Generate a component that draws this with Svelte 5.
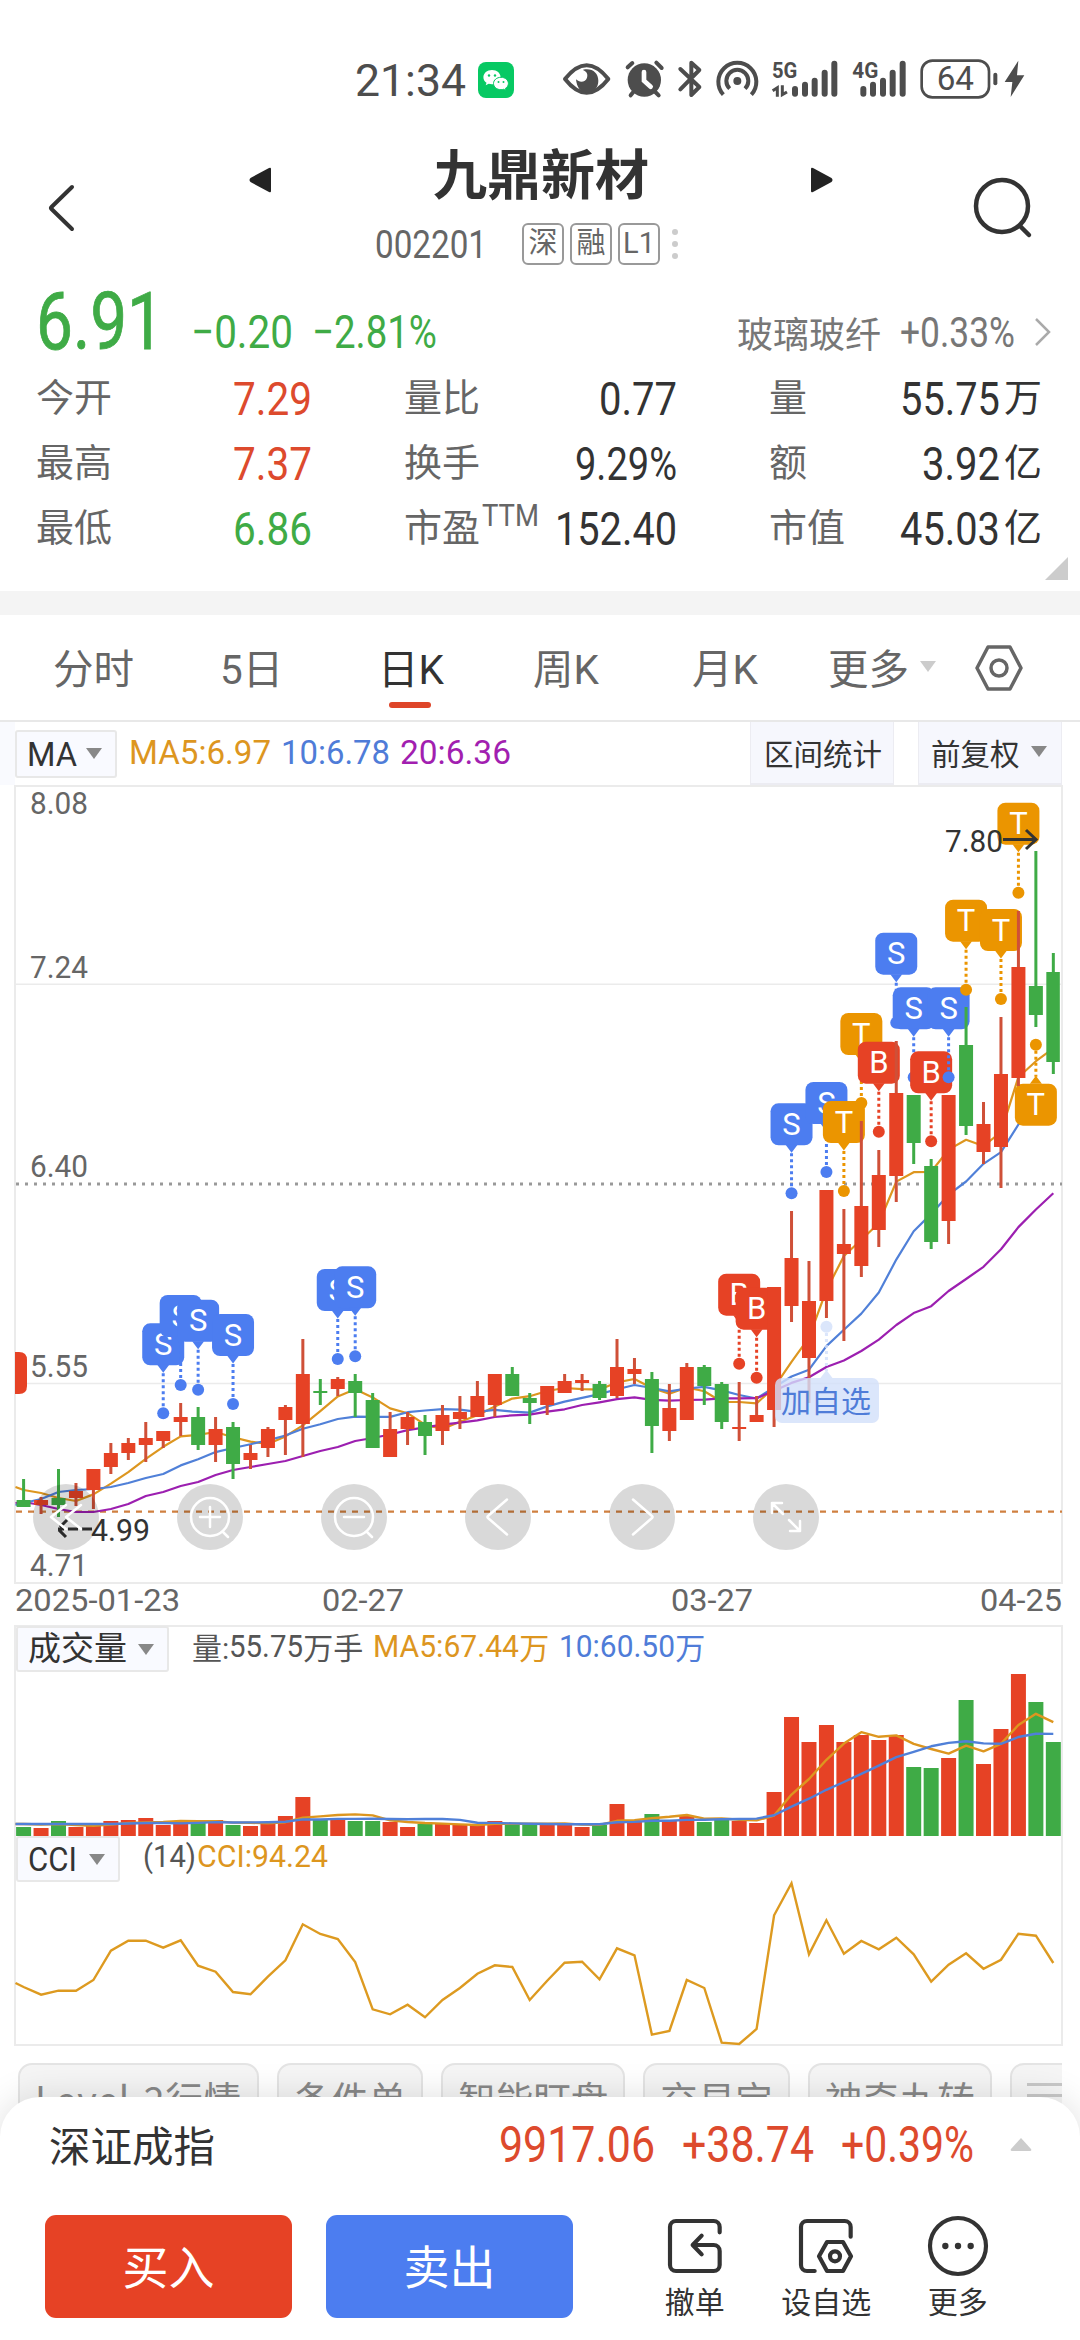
<script lang="ts">
  type Candle = [up: number, high: number, top: number, bottom: number, low: number];

  // up flag, then high / body top / body bottom / low on the chart's y axis
  const candles: Candle[] = [
    [0, 1479, 1500, 1507, 1507], [1, 1497, 1500, 1505, 1514], [0, 1469, 1498, 1505, 1517],
    [1, 1483, 1491, 1498, 1506], [1, 1469, 1469, 1490, 1509], [1, 1443, 1453, 1467, 1474],
    [1, 1438, 1443, 1453, 1460], [1, 1422, 1438, 1445, 1462], [1, 1431, 1431, 1441, 1448],
    [1, 1403, 1417, 1422, 1436], [0, 1407, 1417, 1445, 1450], [1, 1417, 1429, 1445, 1462],
    [0, 1422, 1427, 1464, 1479], [1, 1445, 1453, 1460, 1469], [1, 1427, 1429, 1448, 1457],
    [1, 1405, 1407, 1420, 1455], [1, 1339, 1374, 1424, 1457], [0, 1379, 1391, 1393, 1405],
    [1, 1377, 1379, 1389, 1396], [0, 1374, 1381, 1393, 1417], [0, 1393, 1400, 1448, 1448],
    [1, 1412, 1429, 1457, 1457], [1, 1412, 1417, 1429, 1445], [0, 1415, 1422, 1436, 1455],
    [1, 1405, 1415, 1431, 1445], [1, 1396, 1412, 1419, 1429], [1, 1381, 1396, 1417, 1417],
    [1, 1374, 1374, 1405, 1417], [0, 1367, 1374, 1396, 1396], [0, 1393, 1398, 1403, 1424],
    [1, 1386, 1386, 1405, 1415], [1, 1374, 1381, 1393, 1393], [1, 1374, 1380, 1383, 1391],
    [0, 1381, 1384, 1398, 1400], [1, 1339, 1367, 1396, 1398], [1, 1358, 1369, 1374, 1384],
    [0, 1372, 1379, 1426, 1453], [1, 1384, 1408, 1431, 1441], [1, 1363, 1367, 1420, 1420],
    [0, 1365, 1367, 1386, 1405], [0, 1382, 1384, 1422, 1429], [1, 1382, 1427, 1429, 1441],
    [1, 1396, 1415, 1422, 1422], [1, 1287, 1287, 1410, 1427], [1, 1211, 1258, 1306, 1322],
    [1, 1261, 1301, 1358, 1403], [1, 1190, 1190, 1301, 1318], [1, 1209, 1244, 1254, 1341],
    [1, 1121, 1206, 1266, 1277], [1, 1150, 1175, 1230, 1247], [1, 1041, 1093, 1176, 1202],
    [0, 1095, 1095, 1143, 1164], [0, 1159, 1166, 1242, 1249], [1, 1095, 1095, 1221, 1244],
    [0, 1007, 1045, 1126, 1135], [1, 1102, 1124, 1152, 1164], [1, 1017, 1074, 1147, 1188],
    [1, 911, 967, 1078, 1086], [0, 851, 986, 1015, 1027], [0, 953, 972, 1062, 1074],
  ];

  const volumes = [
    9, 8, 15, 9, 10, 15, 16, 18, 11, 15, 14, 16, 11, 10, 12, 20, 39, 17, 17, 15,
    15, 14, 9, 12, 12, 11, 11, 15, 12, 12, 12, 12, 9, 11, 32, 15, 22, 16, 20, 14,
    16, 15, 13, 44, 119, 94, 111, 94, 101, 96, 101, 69, 68, 78, 136, 72, 107, 162, 134, 94,
  ];

  const cci = [
    1987, 1994.7, 1990.7, 1990.7, 1980, 1950.7, 1940.7, 1940.7, 1947.7, 1940.3,
    1965.7, 1971.7, 1992, 1994.3, 1976.7, 1960.3, 1924.3, 1934, 1939, 1962,
    2009.3, 2014.3, 2004.7, 2017.3, 2000, 1988, 1973.7, 1965.3, 1967, 2000,
    1980.7, 1962.7, 1961.7, 1979.3, 1948.3, 1955.3, 2034.7, 2031, 1980, 1988,
    2042.7, 2044, 2029, 1915.3, 1883.3, 1954.3, 1920.3, 1953.7, 1941, 1949.3,
    1937.7, 1954.3, 1981.7, 1964.7, 1953.3, 1968.7, 1959.7, 1933.7, 1935.7, 1963,
  ];

  const markers = [
    { i: 8, y: 1413.3, t: "S" }, { i: 9, y: 1385, t: "S" }, { i: 10, y: 1389.7, t: "S" },
    { i: 12, y: 1404, t: "S" }, { i: 18, y: 1359, t: "S" }, { i: 19, y: 1356.3, t: "S" },
    { i: 41, y: 1363.7, t: "B" }, { i: 42, y: 1377.7, t: "B" }, { i: 44, y: 1193.3, t: "S" },
    { i: 46, y: 1172, t: "S" }, { i: 47, y: 1191, t: "T" }, { i: 48, y: 1103, t: "T" },
    { i: 49, y: 1131.7, t: "B" }, { i: 50, y: 1022.7, t: "S" }, { i: 51, y: 1077.3, t: "S" },
    { i: 52, y: 1141.3, t: "B" }, { i: 53, y: 1077.3, t: "S" }, { i: 54, y: 989.7, t: "T" },
    { i: 56, y: 999, t: "T" }, { i: 57, y: 892.7, t: "T" }, { i: 58, y: 1044.7, t: "T", below: true },
  ];

  const x = (i: number) => 23.6 + 17.453 * i;
  const close = candles.map(([up, , top, bottom]) => (up ? top : bottom));

  // Moving average; `head` covers the bars whose window starts off screen.
  function ma(src: number[], n: number, head: number[]) {
    return src.map((_, i) =>
      i < n - 1 ? head[i] : src.slice(i - n + 1, i + 1).reduce((a, b) => a + b, 0) / n,
    );
  }

  const line = (ys: number[], y0: number) =>
    `15.5,${y0} ` + ys.map((y, i) => `${x(i).toFixed(1)},${y.toFixed(1)}`).join(" ");

  const ma5 = line(ma(close, 5, [1490, 1493, 1498, 1501]), 1487);
  const ma10 = line(ma(close, 10, [1503, 1499, 1492, 1490, 1489, 1487, 1483, 1478, 1474]), 1505);
  const ma20 = line(
    ma(close, 20, [
      1502, 1505, 1509, 1512, 1512, 1509, 1504, 1496, 1492, 1486,
      1482, 1475, 1470, 1467, 1464, 1461, 1456, 1451, 1447,
    ]),
    1503,
  );
  const toVol = (v: number) => 1835 - v;
  const vol5 = line(ma(volumes, 5, [12, 11.5, 12, 11]).map(toVol), 1823);
  const vol10 = line(ma(volumes, 10, [12, 12, 12, 12, 12, 12, 12.5, 13, 13]).map(toVol), 1823);
  const cciLine = line(cci, 1983);

  const axis = [
    ["8.08", 814], ["7.24", 978], ["6.40", 1177], ["5.55", 1377], ["4.71", 1576],
  ] as [string, number][];

  const stats = [
    [["今开", "7.29", 79, "", "red"], ["量比", "0.77", 78, "", ""], ["量", "55.75", 100, "万", ""]],
    [["最高", "7.37", 79, "", "red"], ["换手", "9.29%", 102, "", ""], ["额", "3.92", 78, "亿", ""]],
    [["最低", "6.86", 79, "", "green"], ["市盈", "152.40", 122, "", ""], ["市值", "45.03", 100, "亿", ""]],
  ] as [string, string, number, string, string][][];

  const tabs = ["分时", "5日", "日K", "周K", "月K"];
  const chips = ["Level-2行情", "条件单", "智能盯盘", "交易宝", "神奇九转"];
</script>

{#snippet num(text: string, w: number, h: number)}
  <svg class="num" width={w} height={h}>
    <text x="0" y={h} font-size={h / 0.711} textLength={w} lengthAdjust="spacingAndGlyphs">{text}</text>
  </svg>
{/snippet}

<div class="app">
  <div class="status">
    {@render num("21:34", 111, 32)}
    <svg class="wechat" width="36" height="36" viewBox="0 0 36 36">
      <rect width="36" height="36" rx="8" fill="#07c963" />
      <path d="M14 8c-5 0-8.600 3.200-8.600 7.200 0 2.300 1.200 4.200 3.100 5.500l-.8 2.600 3-1.500c1 .3 2.100.5 3.300.5 5 0 8.600-3.100 8.600-7.100S19 8 14 8z" fill="#fff" />
      <path d="M23 15.300c-4.200 0-7.500 2.700-7.500 6.200s3.300 6.200 7.500 6.200c.9 0 1.800-.1 2.600-.4l2.500 1.300-.7-2.200c1.900-1.200 3-2.900 3-4.900 0-3.500-3.200-6.200-7.400-6.200z" fill="#fff" stroke="#07c963" />
      <g fill="#07c963">
        <circle cx="11" cy="13.500" r="1.200" /><circle cx="17" cy="13.500" r="1.200" />
        <circle cx="20.500" cy="20" r="1" /><circle cx="25.500" cy="20" r="1" />
      </g>
    </svg>
    <svg class="tray" width="520" height="60" viewBox="0 0 1560 180" fill="none" stroke="#4d4d4d" stroke-width="12" stroke-linecap="round">
      <path d="M135 87Q200 4 265 87Q200 170 135 87z" stroke-linejoin="round" />
      <path d="M168 88c2 24 14 40 34 40s33-16 33-36-14-34-34-34c-8 0-12 2-12 2 12 5 15 14 12 23-4 12-20 18-33 5z" fill="#4d4d4d" stroke="none" />
      <circle cx="373" cy="90" r="50" fill="#4d4d4d" stroke="none" />
      <path d="M323 52l14-13M409 38l16 16M340 126l-8 10M406 126l10 10" />
      <path d="M372 66v26l20 18" stroke="#fff" stroke-width="14" />
      <path d="M481 57l57 54-24 24V38l24 22-57 58" stroke-linejoin="round" />
      <path d="M610 134a57 57 0 1 1 84 0M629 116a33 33 0 1 1 46 0" stroke-linecap="butt" />
      <circle cx="652" cy="93" r="12" fill="#4d4d4d" stroke="none" />
      <path d="M825 117v14M855 104v27M884 92v39M914 68v63M943 41v90M1030 117v14M1059 104v27M1089 92v39M1118 68v63M1148 41v90" stroke-width="18" />
      <path d="M758 122l14-9v27M787 106v28l14-8" stroke-width="9" stroke-linecap="butt" />
      <rect x="1205" y="32" width="202" height="110" rx="32" stroke-width="8" />
      <path d="M1426 74v26" />
      <path d="M1495 32l-41 64h23l-5 45 41-65h-22z" fill="#4d4d4d" stroke="none" />
      <g fill="#4d4d4d" stroke="none">
        <text x="756" y="83" font-size="66" font-weight="700" textLength="76" lengthAdjust="spacingAndGlyphs">5G</text>
        <text x="997" y="83" font-size="66" font-weight="700" textLength="78" lengthAdjust="spacingAndGlyphs">4G</text>
        <text x="1250" y="121" font-size="98" textLength="112" lengthAdjust="spacingAndGlyphs">64</text>
      </g>
    </svg>
  </div>

  <header>
    <svg class="back" width="30" height="50" viewBox="0 0 30 50" fill="none" stroke="#333" stroke-width="4" stroke-linecap="round" stroke-linejoin="round">
      <path d="M26 4L5.500 24q-1 1 0 2L26 46" />
    </svg>
    <div class="title">
      <div class="name">
        <svg width="22" height="26" viewBox="0 0 22 26"><path d="M22 2v22q0 2-2 1L1.500 15q-2-2 0-4L20 1q2-1 2 1z" fill="#222" /></svg>
        <h1>九鼎新材</h1>
        <svg width="22" height="26" viewBox="0 0 22 26"><path d="M0 2v22q0 2 2 1l18.500-10q2-2 0-4L2 1Q0 0 0 2z" fill="#222" /></svg>
      </div>
      <div class="code">
        {@render num("002201", 112, 27)}
        <div class="marks"><i>深</i><i>融</i><i>L1</i></div>
        <div class="dots"><b></b><b></b><b></b></div>
      </div>
    </div>
    <svg class="search" width="60" height="62" viewBox="0 0 60 62" fill="none" stroke="#333" stroke-width="4.500" stroke-linecap="round">
      <circle cx="29" cy="30" r="26" /><path d="M47 50l9 9" />
    </svg>
  </header>

  <section class="quote">
    <div class="price">
      <span class="last">{@render num("6.91", 128, 56)}</span>
      {@render num("−0.20", 102, 33)}
      <span class="pct">{@render num("−2.81%", 125, 33)}</span>
      <div class="sector">
        <span>玻璃玻纤</span>
        {@render num("+0.33%", 115, 30)}
        <svg width="18" height="30" viewBox="0 0 18 30" fill="none" stroke="#aaa" stroke-width="2.500"><path d="M2 2l13 13L2 28" /></svg>
      </div>
    </div>
    {#each stats as row}
      <div class="stats">
        {#each row as [label, value, w, unit, tone]}
          <div class="stat">
            <span class="label">{label}{#if label === "市盈"}<sup>{@render num("TTM", 57, 22)}</sup>{/if}</span>
            <span class="value {tone}">{@render num(value, w, 33)}{#if unit}<span class="unit">{unit}</span>{/if}</span>
          </div>
        {/each}
      </div>
    {/each}
    <svg class="corner" width="23" height="23" viewBox="0 0 23 23"><path d="M23 0v23H0z" fill="#ccc" /></svg>
  </section>

  <nav>
    {#each tabs as tab}
      <span class:active={tab === "日K"}>{tab}</span>
    {/each}
    <span>更多<em class="caret light"></em></span>
    <svg width="48" height="48" viewBox="0 0 48 48" fill="none" stroke="#666" stroke-width="3.500" stroke-linejoin="round">
      <path d="M13 3h22l11 21-11 21H13L2 24z" /><circle cx="24" cy="24" r="8" />
    </svg>
  </nav>

  <div class="indicators">
    <div class="select">{@render num("MA", 50, 24)}<em class="caret"></em></div>
    <div class="legend">
      <span class="gold">{@render num("MA5:6.97", 142, 24)}</span>
      <span class="blue">{@render num("10:6.78", 109, 24)}</span>
      <span class="purple">{@render num("20:6.36", 111, 24)}</span>
    </div>
    <div class="tool range">区间统计</div>
    <div class="tool">前复权<em class="caret"></em></div>
  </div>

  <svg class="chart" width="1080" height="800" viewBox="0 785 1080 800">
    <g stroke="#ebebeb" stroke-width="2" fill="none">
      <rect x="15" y="786" width="1047" height="797" />
      <path d="M16 984.300H1061M16 1383.400H1061" stroke-width="1.500" />
    </g>
    <path d="M16 1184H1062" stroke="#999" stroke-width="3" stroke-dasharray="3 6" />
    <path d="M16 1511.700H1062" stroke="#d08040" stroke-width="2.200" stroke-dasharray="6 6" />
    <path d="M15 1352h4q8 0 8 8v26q0 8-8 8h-4z" fill="#e64225" />

    <g fill="none" stroke-width="2.200" stroke-linejoin="round">
      <polyline points={ma5} stroke="#dd961f" />
      <polyline points={ma10} stroke="#5080d8" />
      <polyline points={ma20} stroke="#9c1fb0" />
    </g>

    {#each markers as m}
      {@const top = m.below ? m.y + 39 : m.y - 90}
      <g class="marker {m.t}">
        <rect x={x(m.i) - 21} y={top} width="42" height="42" rx="8" />
        {#if m.below}
          <path class="stem" d="M{x(m.i)} {m.y}v32" />
          <path d="M{x(m.i) - 6} {top}l6-8 6 8z" />
        {:else}
          <path class="stem" d="M{x(m.i)} {top + 50}V{m.y}" />
          <path d="M{x(m.i) - 6} {top + 41.500}l6 8 6-8z" />
        {/if}
        <circle cx={x(m.i)} cy={m.y} r="6" />
        <text x={x(m.i)} y={top + 31.500}>{m.t}</text>
      </g>
    {/each}

    {#each candles as [up, high, top, bottom, low], i}
      <rect class={up ? "wick-up" : "down"} x={x(i) - 1.500} y={high} width="3" height={low - high} />
      <rect class={up ? "up" : "down"} x={x(i) - 7} y={top} width={i === 59 ? 13.500 : 14} height={bottom - top} />
    {/each}

    <g fill="#d3e0fb" opacity=".8">
      <circle cx={x(46)} cy="1326.700" r="6" />
      <path d="M{x(46)} 1333v38" stroke="#d3e0fb" stroke-width="3" stroke-dasharray="3 3" />
      <path d="M{x(46) - 6} 1378l6-8 6 8z" />
      <rect x="775" y="1378" width="104" height="45" rx="7" />
    </g>
    <text class="tag" x="781" y="1412" font-size="30">加自选</text>

    {#each axis as [label, y]}
      <text class="axis" x="30" {y} textLength="58" lengthAdjust="spacingAndGlyphs">{label}</text>
    {/each}
    <g fill="none" stroke="#333" stroke-width="3">
      <path d="M1003 839.500h33M1026 830l10 9.500-10 9.500" />
      <path d="M92 1529H58M67 1520l-9 9 9 9" stroke-dasharray="10 4" />
    </g>
    <text class="mark" x="945" y="852" textLength="58" lengthAdjust="spacingAndGlyphs">7.80</text>
    <text class="mark" x="91" y="1541" textLength="59" lengthAdjust="spacingAndGlyphs">4.99</text>

    {#each [66, 210, 354, 498, 642, 786] as cx, k}
      <g transform="translate({cx} 1517)" fill="none" stroke="#fff" stroke-width="2.500" stroke-linecap="round" stroke-linejoin="round">
        <circle r="33" fill="#000" fill-opacity=".15" stroke="none" />
        {#if k === 0}
          <path d="M0-12L-15 0 0 12M15-12L0 0l15 12" />
        {:else if k < 3}
          <circle r="19" /><path d="M13 15l5 5M-10 0h20" />
          {#if k === 1}<path d="M0-10v20" />{/if}
        {:else if k === 3}
          <path d="M9-17.500L-10-1q-1 1 0 2L9 17.500" />
        {:else if k === 4}
          <path d="M-9-17.500L10-1q1 1 0 2L-9 17.500" />
        {:else}
          <path d="M-3-3l-11-11M-14-4v-10h10M3 3l11 11M14 4v10H4" />
        {/if}
      </g>
    {/each}
  </svg>

  <div class="dates">
    {@render num("2025-01-23", 165, 22)}
    {@render num("02-27", 82, 22)}
    {@render num("03-27", 82, 22)}
    {@render num("04-25", 82, 22)}
  </div>

  <div class="panel">
    <div class="bar">
      <div class="select wide">成交量<em class="caret"></em></div>
      <div class="legend">
        <span class="grey">量:{@render num("55.75", 74, 22)}万手</span>
        <span class="gold">{@render num("MA5:67.44", 146, 22)}万</span>
        <span class="blue">{@render num("10:60.50", 116, 22)}万</span>
      </div>
    </div>
    <svg width="1080" height="164" viewBox="0 1672 1080 164">
      {#each volumes as v, i}
        <rect class={candles[i][0] ? "up" : "down"} x={x(i) - 7.500} y={1835 - v} width="15" height={v} />
      {/each}
      <g fill="none" stroke-width="2.400" stroke-linejoin="round">
        <polyline points={vol5} stroke="#dd961f" />
        <polyline points={vol10} stroke="#5080d8" />
      </g>
    </svg>
  </div>

  <div class="panel cci">
    <div class="bar">
      <div class="select">{@render num("CCI", 49, 24)}<em class="caret"></em></div>
      <div class="legend">
        <span class="grey">{@render num("(14)", 53, 22)}</span>
        <span class="gold">{@render num("CCI:94.24", 131, 22)}</span>
      </div>
    </div>
    <svg width="1080" height="162" viewBox="0 1882 1080 162">
      <polyline points={cciLine} fill="none" stroke="#dd9a20" stroke-width="2.400" />
    </svg>
  </div>

  <div class="chips">
    {#each chips as chip}
      <span>{chip}</span>
    {/each}
    <span class="menu"><u></u><u></u></span>
  </div>

  <footer>
    <div class="index">
      <span>深证成指</span>
      <div class="figures">
        {@render num("9917.06", 156, 35)}
        {@render num("+38.74", 132, 35)}
        {@render num("+0.39%", 133, 35)}
      </div>
      <svg width="22" height="13" viewBox="0 0 22 13"><path d="M11 0l10 11q1 2-1 2H2q-2 0-1-2z" fill="#ccc" /></svg>
    </div>
    <div class="actions">
      <button class="buy">买入</button>
      <button class="sell">卖出</button>
      <div class="act">
        <svg width="60" height="60" viewBox="0 0 180 180">
          <path d="M164 49V33a18 18 0 0 0-18-18H33a18 18 0 0 0-18 18v114a18 18 0 0 0 18 18h113a18 18 0 0 0 18-18v-42a18 18 0 0 0-18-18H84M110 59L83 87l27 28" />
        </svg>
        撤单
      </div>
      <div class="act">
        <svg width="60" height="60" viewBox="0 0 180 180">
          <path d="M164 62V33a18 18 0 0 0-18-18H33a18 18 0 0 0-18 18v114a18 18 0 0 0 18 18h23M93 78h48l24 43-24 44H93l-24-44z" />
          <circle cx="117" cy="121" r="15" />
        </svg>
        设自选
      </div>
      <div class="act">
        <svg width="60" height="60" viewBox="0 0 180 180">
          <circle cx="90" cy="90" r="84" />
          <path d="M52 90h.1M90 90h.1M128 90h.1" stroke-width="19" />
        </svg>
        更多
      </div>
    </div>
  </footer>
</div>

<style>
  .app {
    position: relative;
    display: flex;
    flex-direction: column;
    width: 1080px;
    height: 2340px;
    overflow: hidden;
    background: #fff;
    color: #333;
    font-family: Roboto, "Noto Sans CJK SC", sans-serif;
  }
  svg {
    display: block;
    flex: none;
    overflow: visible;
  }
  .num {
    display: inline-block;
    fill: currentColor;
  }

  .red { color: #dd4a2d; }
  .green { color: #3fab46; }
  .gold { color: #dd961f; }
  .blue { color: #4f7cd8; }
  .purple { color: #a21fb0; }
  .grey { color: #555; }

  .caret {
    width: 0;
    height: 0;
    border: solid transparent;
    border-width: 11px 8.5px 0;
    border-top-color: #888;
  }
  .caret.light {
    border-top-color: #ccc;
  }

  .status {
    display: flex;
    align-items: center;
    height: 60px;
    padding: 50px 40px 30px 355px;
    color: #4d4d4d;
  }
  .wechat {
    margin: 0 6px 0 12px;
  }

  header {
    display: flex;
    align-items: flex-start;
    height: 140px;
    padding-left: 46px;
  }
  .back {
    margin-top: 43px;
  }
  .title {
    flex: 1;
    margin-right: -5px;
  }
  .name {
    display: flex;
    align-items: center;
    justify-content: center;
    height: 80px;
    gap: 162px;
    margin-left: 28px;
  }
  h1 {
    margin: -7px 0 0;
    font-size: 54px;
    font-weight: 600;
    line-height: 80px;
    white-space: nowrap;
  }
  .code {
    display: flex;
    align-items: center;
    height: 42px;
    margin-top: 3px;
    padding-left: 299px;
    color: #666;
  }
  .marks {
    display: flex;
    gap: 6px;
    margin-left: 35px;
  }
  .marks i {
    box-sizing: border-box;
    width: 42px;
    height: 42px;
    border: 2px solid #999;
    border-radius: 6px;
    font-size: 29px;
    font-style: normal;
    line-height: 37px;
    text-align: center;
  }
  .dots {
    display: grid;
    gap: 6px;
    margin-left: 12px;
  }
  .dots b {
    width: 6px;
    height: 6px;
    border-radius: 50%;
    background: #ccc;
  }
  .search {
    margin: 36px 47px 0 0;
  }

  .quote {
    display: flex;
    flex-direction: column;
    height: 311px;
    border-bottom: 24px solid #f4f4f4;
  }
  .price {
    display: flex;
    align-items: flex-end;
    height: 68px;
    padding: 0 28px 0 36px;
    margin-bottom: 18px;
    color: #3fab46;
  }
  .last {
    display: flex;
    margin: 0 27px -1px 0;
    stroke: #3fab46;
    stroke-width: 0.8px;
  }
  .pct {
    display: flex;
    margin-left: 19px;
  }
  .sector {
    display: flex;
    align-items: center;
    margin-left: auto;
    height: 33px;
    font-size: 36px;
    color: #777;
  }
  .sector .num,
  .sector svg {
    margin-left: 19px;
  }
  .stats {
    display: grid;
    grid-template-columns: 276px 273px 273px;
    gap: 92px;
    height: 65px;
    padding-left: 36px;
    align-items: center;
  }
  .stat {
    display: flex;
    align-items: center;
    justify-content: space-between;
    height: 65px;
    line-height: 65px;
    font-size: 38px;
    white-space: nowrap;
  }
  .label {
    display: flex;
    color: #666;
  }
  sup {
    margin: 8px 0 0 2px;
    line-height: 22px;
  }
  .value {
    display: flex;
    align-items: center;
  }
  .unit {
    margin-left: 4px;
  }
  .corner {
    margin: -4px 12px 0 auto;
  }

  nav {
    display: grid;
    grid-template-columns: 167px 158px 155px 159px 136px 147px 48px;
    align-items: center;
    height: 105px;
    padding-left: 53px;
    border-bottom: 2px solid #e8e8e8;
    font-size: 40.5px;
    color: #666;
  }
  nav span {
    display: flex;
    align-items: center;
    height: 105px;
    margin-top: -2px;
  }
  nav .caret {
    margin-left: 11px;
  }
  nav .active {
    position: relative;
    color: #333;
  }
  nav .active::after {
    content: "";
    position: absolute;
    left: 11px;
    bottom: 11px;
    width: 42px;
    height: 6px;
    border-radius: 3px;
    background: #de4529;
  }

  .indicators {
    display: flex;
    align-items: center;
    box-sizing: border-box;
    height: 63px;
    padding-right: 18px;
    border-left: 15px solid #f9fafe;
  }
  .select {
    display: flex;
    align-items: center;
    justify-content: space-between;
    box-sizing: border-box;
    width: 102px;
    height: 48px;
    padding: 0 13px 0 10px;
    border: 2px solid #e8e8e8;
    border-radius: 3px;
    background: #f9faff;
    font-size: 33px;
    line-height: 44px;
  }
  .select.wide {
    width: 153px;
  }
  .legend {
    display: flex;
    align-items: center;
    gap: 10px;
    margin: -3px 0 0 12px;
    font-size: 30px;
    white-space: nowrap;
  }
  .legend span {
    display: flex;
    align-items: center;
  }
  .tool {
    display: flex;
    align-items: center;
    justify-content: space-between;
    box-sizing: border-box;
    width: 144px;
    height: 63px;
    padding: 0 14px 2px 12px;
    border: solid #ececf2;
    border-width: 0 1px 2px;
    background: #f6f7fd;
    font-size: 29.5px;
    white-space: nowrap;
  }
  .range {
    margin: 0 24px 0 auto;
    padding: 0 13px 2px 13px;
  }

  .marker.S { fill: #4c7df0; stroke: #4c7df0; }
  .marker.T { fill: #eb9500; stroke: #eb9500; }
  .marker.B { fill: #e64225; stroke: #e64225; }
  .marker rect,
  .marker path,
  .marker circle {
    stroke-width: 0;
  }
  .marker .stem {
    stroke-width: 3px;
    stroke-dasharray: 3 3;
  }
  .marker text {
    fill: #fff;
    stroke: none;
    font-size: 31px;
    text-anchor: middle;
  }
  .up { fill: #e64225; }
  .wick-up { fill: #cf5038; }
  .down { fill: #3fab46; }
  .tag { fill: #4f7cd8; }
  .axis {
    fill: #666;
    font-size: 30.5px;
  }
  .mark {
    fill: #333;
    font-size: 30.5px;
  }

  .dates {
    display: flex;
    height: 36px;
    padding: 4px 18px 0 15px;
    color: #666;
  }
  .dates .num:nth-child(2) {
    margin-left: 142px;
  }
  .dates .num:nth-child(3) {
    margin-left: 267px;
  }
  .dates .num:last-child {
    margin-left: auto;
  }

  .panel {
    height: 209px;
    border-top: 2px solid #ebebeb;
    margin: 0 17px 0 14px;
    border-left: 2px solid #ebebeb;
    border-right: 2px solid #ebebeb;
  }
  .panel > svg {
    margin-left: -16px;
  }
  .bar {
    display: flex;
    height: 46px;
  }
  .bar .legend {
    height: 40px;
    margin: -1px 0 0 23px;
  }
  .bar .select {
    height: 46px;
    margin-top: -1px;
  }
  .cci {
    height: 208px;
    border-top: 0;
    border-bottom: 2px solid #ebebeb;
  }
  .cci .select {
    width: 104px;
    margin-top: 0;
  }
  .cci .legend {
    gap: 1px;
    margin-top: 0;
  }

  .chips {
    display: flex;
    gap: 18px;
    width: 1044px;
    margin: 17px 0 0 18px;
    overflow: hidden;
    font-family: "Noto Sans CJK SC", sans-serif;
  }
  .chips span {
    flex: none;
    box-sizing: border-box;
    height: 70px;
    padding: 0 15px;
    border: 2px solid #e4e4e4;
    border-radius: 14px;
    background: #f5f5f5;
    font-size: 37.5px;
    line-height: 66px;
    color: #888;
  }
  .chips span:first-child {
    letter-spacing: 0.7px;
  }
  .chips .menu {
    display: grid;
    align-content: start;
    gap: 8px;
    width: 120px;
    padding-top: 18px;
  }
  .chips u {
    height: 3px;
    background: #c8c8c8;
  }

  footer {
    position: absolute;
    left: 0;
    right: 0;
    bottom: 0;
    height: 243px;
    border-radius: 40px 40px 0 0;
    background: #fff;
    box-shadow: 0 0 36px rgba(0, 0, 0, 0.13);
  }
  .index {
    display: flex;
    align-items: center;
    height: 94px;
    padding: 0 48px 0 49px;
    font-size: 41.5px;
  }
  .figures {
    display: flex;
    gap: 27px;
    margin: 0 36px 0 auto;
    color: #dd4a2d;
  }
  .actions {
    display: flex;
    align-items: flex-start;
    padding: 24px 0 0 45px;
  }
  button {
    width: 247px;
    height: 103px;
    margin-right: 34px;
    padding: 0 0 5px;
    border: 0;
    border-radius: 11px;
    font: inherit;
    font-size: 46px;
    color: #fff;
  }
  .buy { background: #e64225; }
  .sell { background: #4c7df0; }
  .act {
    display: flex;
    flex-direction: column;
    align-items: center;
    width: 131.5px;
    margin-top: 1px;
    font-size: 30px;
    line-height: 53px;
  }
  .sell + .act {
    margin-left: 22px;
  }
  .act svg {
    fill: none;
    stroke: #333;
    stroke-width: 12.5px;
    stroke-linecap: round;
    stroke-linejoin: round;
  }
</style>
